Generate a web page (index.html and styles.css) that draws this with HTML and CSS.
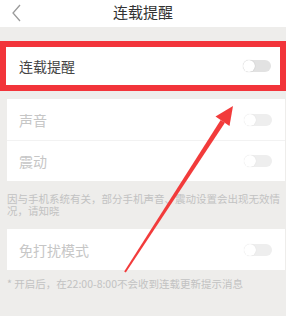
FILE: index.html
```html
<!DOCTYPE html>
<html lang="zh-CN">
<head>
<meta charset="UTF-8">
<title>连载提醒</title>
<link rel="stylesheet" href="styles.css">
</head>
<body>
  <div class="header">
    <svg class="back" width="12" height="20" viewBox="0 0 12 20"><polyline points="9,2 2,10 9,18" fill="none" stroke="#9a9a9a" stroke-width="1.3"/></svg>
    <h1 class="title">连载提醒</h1>
  </div>

  <div class="highlight">
    <div class="row main">
      <span class="label">连载提醒</span>
      <span class="switch"></span>
    </div>
  </div>

  <div class="card faded">
    <div class="row">
      <span class="label">声音</span>
      <span class="switch"></span>
    </div>
    <div class="row">
      <span class="label">震动</span>
      <span class="switch"></span>
    </div>
  </div>
  <p class="note">因与手机系统有关，部分手机声音、震动设置会出现无效情况，请知晓</p>

  <div class="card faded second">
    <div class="row">
      <span class="label">免打扰模式</span>
      <span class="switch"></span>
    </div>
  </div>
  <p class="note last">* 开启后，在22:00-8:00不会收到连载更新提示消息</p>

  <svg class="arrow" width="286" height="316" viewBox="0 0 286 316">
    <polygon points="124.2,271.5 125.8,272.5 224.9,122.7 220.7,119.9" fill="#f23b3b"/>
    <polygon points="233,106 215.5,116.5 229.5,126" fill="#f23b3b"/>
  </svg>
</body>
</html>
```

FILE: styles.css
```css
*{
    margin: 0;
    padding: 0;
    box-sizing: border-box;
    font-family: "Noto Sans CJK SC", "Noto Sans", sans-serif;
}
body{
    width: 286px;
    height: 316px;
    overflow: hidden;
    background: #eeedeb;
    position: relative;
}
.header{
    height: 27px;
    background: #fff;
    display: flex;
    align-items: center;
    justify-content: center;
    position: relative;
}
.header .back{
    position: absolute;
    left: 11px;
    top: 3px;
}
.header .title{
    font-size: 15px;
    font-weight: normal;
    color: #333;
    line-height: 24px;
    margin-top: -4px;
}
.highlight{
    margin-top: 14px;
    border: 6px solid #f2343a;
    background: #fff;
}
.row{
    height: 41px;
    display: flex;
    align-items: center;
    justify-content: space-between;
    padding: 0 13px 0 12px;
}
.row + .row{
    border-top: 1px solid #f2f2f2;
}
.row.main{
    height: 38px;
    padding: 0 9px 0 13px;
}
.label{
    font-size: 14px;
    color: #444;
}
.switch{
    width: 28px;
    height: 12px;
    border-radius: 6px;
    background: #e2e2e2;
    position: relative;
}
.switch::before{
    content: "";
    position: absolute;
    left: 0;
    top: 0;
    width: 12px;
    height: 12px;
    border-radius: 50%;
    background: #fff;
    box-shadow: 0 0 1px rgba(0,0,0,0.25);
}
.card{
    margin: 8px 1px 0 7px;
    background: #fff;
}
.card.second{
    margin-top: 12px;
}
.faded .label{
    color: #c6c6c6;
}
.faded .switch{
    background: #eeeeee;
}
.faded .switch::before{
    box-shadow: 0 0 1px rgba(0,0,0,0.12);
}
.note{
    padding: 12px 1px 0 7px;
    font-size: 10.5px;
    line-height: 12px;
    color: #c2c2c2;
}
.note.last{
    padding-top: 8px;
}
.arrow{
    position: absolute;
    left: 0;
    top: 0;
}
```
